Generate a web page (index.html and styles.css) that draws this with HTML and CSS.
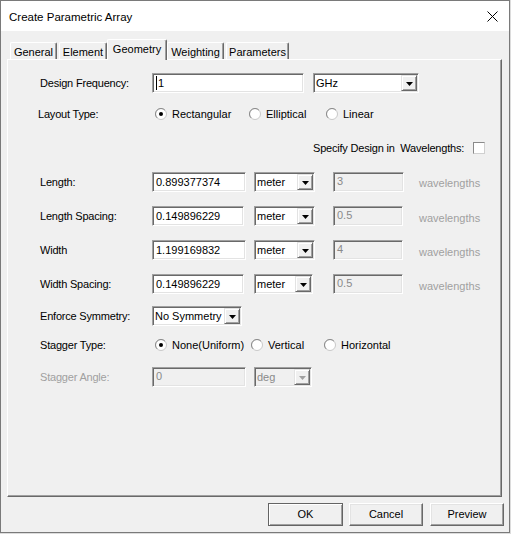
FILE: index.html
```html
<!DOCTYPE html>
<html>
<head>
<meta charset="utf-8">
<title>Create Parametric Array</title>
<link rel="stylesheet" href="styles.css">
</head>
<body>
<div class="win">
  <div class="titlebar">
    <span class="title">Create Parametric Array</span>
    <svg class="close" width="11" height="11" viewBox="0 0 11 11"><path d="M0.5 0.5 L10.5 10.5 M10.5 0.5 L0.5 10.5" stroke="#000" stroke-width="1" fill="none"/></svg>
  </div>
  <div class="client">
    <div class="tabs">
      <div class="tab t-gen">General</div>
      <div class="tab t-ele">Element</div>
      <div class="tab t-geo active">Geometry</div>
      <div class="tab t-wei">Weighting</div>
      <div class="tab t-par">Parameters</div>
    </div>
    <div class="panel">
      <div class="row r1">
        <span class="lbl">Design Frequency:</span>
        <div class="tb w152"><span class="caret"></span>1</div>
        <div class="sel w106 ml9"><span class="stxt">GHz</span><span class="dbtn"><svg width="7" height="4"><polygon points="0,0 7,0 3.5,4" fill="#000"/></svg></span></div>
      </div>
      <div class="row r2">
        <span class="lbl lbl-lt">Layout Type:</span>
        <div class="opts">
          <span class="opt lt1"><svg class="radio" width="12" height="12" viewBox="0 0 12 12"><circle cx="6" cy="6" r="5.5" fill="#fff" stroke="#c8c8c8"/><path d="M2.1 9.9 A5.5 5.5 0 0 1 9.9 2.1" stroke="#8a8a8a" fill="none"/><circle cx="6" cy="6" r="2" fill="#000"/></svg>Rectangular</span>
          <span class="opt lt2"><svg class="radio" width="12" height="12" viewBox="0 0 12 12"><circle cx="6" cy="6" r="5.5" fill="#fff" stroke="#c8c8c8"/><path d="M2.1 9.9 A5.5 5.5 0 0 1 9.9 2.1" stroke="#8a8a8a" fill="none"/></svg>Elliptical</span>
          <span class="opt"><svg class="radio" width="12" height="12" viewBox="0 0 12 12"><circle cx="6" cy="6" r="5.5" fill="#fff" stroke="#c8c8c8"/><path d="M2.1 9.9 A5.5 5.5 0 0 1 9.9 2.1" stroke="#8a8a8a" fill="none"/></svg>Linear</span>
        </div>
      </div>
      <div class="row r3">
        <span class="spec">Specify Design in&nbsp; Wavelengths:</span>
        <span class="chk"></span>
      </div>
      <div class="row r4">
        <span class="lbl">Length:</span>
        <div class="tb w94">0.899377374</div>
        <div class="sel w61 ml8"><span class="stxt">meter</span><span class="dbtn"><svg width="7" height="4"><polygon points="0,0 7,0 3.5,4" fill="#000"/></svg></span></div>
        <div class="tb dis w71 ml18">3</div>
        <span class="wl">wavelengths</span>
      </div>
      <div class="row r5">
        <span class="lbl">Length Spacing:</span>
        <div class="tb w92">0.149896229</div>
        <div class="sel w61 ml10"><span class="stxt">meter</span><span class="dbtn"><svg width="7" height="4"><polygon points="0,0 7,0 3.5,4" fill="#000"/></svg></span></div>
        <div class="tb dis w70 ml18">0.5</div>
        <span class="wl wl2">wavelengths</span>
      </div>
      <div class="row r6">
        <span class="lbl">Width</span>
        <div class="tb w94">1.199169832</div>
        <div class="sel w61 ml8"><span class="stxt">meter</span><span class="dbtn"><svg width="7" height="4"><polygon points="0,0 7,0 3.5,4" fill="#000"/></svg></span></div>
        <div class="tb dis w70 ml18">4</div>
        <span class="wl wl2">wavelengths</span>
      </div>
      <div class="row r7">
        <span class="lbl">Width Spacing:</span>
        <div class="tb w92">0.149896229</div>
        <div class="sel w59 ml10"><span class="stxt">meter</span><span class="dbtn"><svg width="7" height="4"><polygon points="0,0 7,0 3.5,4" fill="#000"/></svg></span></div>
        <div class="tb dis w70 ml20">0.5</div>
        <span class="wl wl2">wavelengths</span>
      </div>
      <div class="row r8">
        <span class="lbl">Enforce Symmetry:</span>
        <div class="sel w90"><span class="stxt">No Symmetry</span><span class="dbtn"><svg width="7" height="4"><polygon points="0,0 7,0 3.5,4" fill="#000"/></svg></span></div>
      </div>
      <div class="row r9">
        <span class="lbl">Stagger Type:</span>
        <div class="opts">
          <span class="opt st1"><svg class="radio" width="12" height="12" viewBox="0 0 12 12"><circle cx="6" cy="6" r="5.5" fill="#fff" stroke="#c8c8c8"/><path d="M2.1 9.9 A5.5 5.5 0 0 1 9.9 2.1" stroke="#8a8a8a" fill="none"/><circle cx="6" cy="6" r="2" fill="#000"/></svg>None(Uniform)</span>
          <span class="opt st2"><svg class="radio" width="12" height="12" viewBox="0 0 12 12"><circle cx="6" cy="6" r="5.5" fill="#fff" stroke="#c8c8c8"/><path d="M2.1 9.9 A5.5 5.5 0 0 1 9.9 2.1" stroke="#8a8a8a" fill="none"/></svg>Vertical</span>
          <span class="opt"><svg class="radio" width="12" height="12" viewBox="0 0 12 12"><circle cx="6" cy="6" r="5.5" fill="#fff" stroke="#c8c8c8"/><path d="M2.1 9.9 A5.5 5.5 0 0 1 9.9 2.1" stroke="#8a8a8a" fill="none"/></svg>Horizontal</span>
        </div>
      </div>
      <div class="row r10">
        <span class="lbl gray">Stagger Angle:</span>
        <div class="tb dis w94">0</div>
        <div class="sel sdis w58 ml8"><span class="stxt">deg</span><span class="dbtn"><svg width="7" height="4"><polygon points="0,0 7,0 3.5,4" fill="#a0a0a0"/></svg></span></div>
      </div>
    </div>
    <div class="buttons">
      <div class="btn def">OK</div>
      <div class="btn b-cancel">Cancel</div>
      <div class="btn b-prev">Preview</div>
    </div>
  </div>
</div>
</body>
</html>
```
FILE: styles.css
```css
* { box-sizing: border-box; }
html, body { margin: 0; padding: 0; }
body {
  width: 511px;
  height: 534px;
  overflow: hidden;
  background: #dcdcdc;
  font-family: "Liberation Sans", Arial, sans-serif;
  font-size: 11px;
  color: #000;
}
.win {
  width: 510px;
  height: 533px;
  background: #f0f0f0;
  border: 1px solid #7a7a7a;
  display: flex;
  flex-direction: column;
}
.titlebar {
  height: 30px;
  background: #fff;
  display: flex;
  align-items: center;
  padding-left: 8px;
  flex: none;
}
.title {
  font-size: 11.5px;
  flex: 1;
  padding-top: 1px;
}
.close {
  margin-right: 11px;
  margin-top: 1px;
}
.client {
  flex: 1;
  padding-top: 8px;
}
.tabs {
  display: flex;
  align-items: flex-end;
  height: 20px;
  padding-left: 9px;
  position: relative;
  z-index: 2;
}
.tab {
  height: 17px;
  display: flex;
  align-items: center;
  justify-content: center;
  background: #f0f0f0;
  border-top: 1px solid #fff;
  border-left: 1px solid #fff;
  border-right: 1px solid #696969;
  box-shadow: inset -1px 0 #a0a0a0;
  border-radius: 2px 2px 0 0;
  padding-top: 1px;
}
.t-gen { width: 47px; }
.t-ele { width: 48px; margin-left: 2px; }
.t-geo { width: 60px; }
.t-wei { width: 57px; }
.t-par { width: 63px; margin-left: 2px; }
.tab.active {
  height: 21px;
  margin-bottom: -1px;
  padding-top: 0;
  padding-bottom: 3px;
}
.panel {
  margin-left: 6px;
  width: 495px;
  height: 438px;
  border: 1px solid;
  border-color: #fff #696969 #696969 #fff;
  box-shadow: inset -1px -1px #a0a0a0;
  padding: 13px 0 0 32px;
  position: relative;
  z-index: 1;
}
.row {
  display: flex;
  align-items: center;
  height: 20px;
}
.r2 { margin-top: 11px; }
.r3, .r4, .r5, .r6, .r7 { margin-top: 14px; }
.r8 { margin-top: 12px; }
.r9 { margin-top: 9px; }
.r10 { margin-top: 12px; }
.lbl {
  width: 112px;
  flex: none;
  letter-spacing: -0.2px;
}
.lbl-lt { margin-left: -2px; width: 114px; }
.gray { color: #a0a0a0; }
.tb {
  height: 20px;
  background: #fff;
  border: 1px solid;
  border-color: #a0a0a0 #fff #fff #a0a0a0;
  box-shadow: inset 1px 1px #696969, inset -1px -1px #e3e3e3;
  display: flex;
  align-items: center;
  padding: 0 2px 1px 3px;
  flex: none;
}
.tb.dis {
  background: #f0f0f0;
  color: #8a8a8a;
  align-items: flex-start;
  padding-top: 2px;
}
.caret {
  display: inline-block;
  width: 1px;
  height: 14px;
  background: #000;
  margin-right: 1px;
}
.sel {
  height: 20px;
  background: #fff;
  border: 1px solid;
  border-color: #a0a0a0 #fff #fff #a0a0a0;
  box-shadow: inset 1px 1px #696969, inset -1px -1px #e3e3e3;
  padding: 1px;
  display: flex;
  align-items: center;
  flex: none;
}
.sel.sdis { background: #f0f0f0; color: #8a8a8a; }
.stxt {
  flex: 1;
  padding-left: 1px;
  padding-bottom: 1px;
  white-space: nowrap;
  overflow: hidden;
}
.dbtn {
  width: 16px;
  height: 16px;
  flex: none;
  background: #f0f0f0;
  border: 1px solid;
  border-color: #e3e3e3 #696969 #696969 #e3e3e3;
  box-shadow: inset 1px 1px #fff, inset -1px -1px #a0a0a0;
  display: flex;
  align-items: center;
  justify-content: center;
  padding-top: 1px;
}
.w152 { width: 152px; }
.w106 { width: 106px; }
.w94 { width: 94px; }
.w92 { width: 92px; }
.w90 { width: 90px; }
.w71 { width: 71px; }
.w70 { width: 70px; }
.w61 { width: 61px; }
.w59 { width: 59px; }
.w58 { width: 58px; }
.ml8 { margin-left: 8px; }
.ml9 { margin-left: 9px; }
.ml10 { margin-left: 10px; }
.ml18 { margin-left: 18px; }
.ml20 { margin-left: 20px; }
.wl {
  color: #a0a0a0;
  margin-left: 15px;
  padding-top: 1px;
}
.wl2 { margin-left: 16px; padding-top: 3px; }
.opts {
  display: flex;
  align-items: center;
  margin-left: 3px;
}
.opt {
  display: flex;
  align-items: center;
  white-space: nowrap;
}
.radio { margin-right: 5px; flex: none; }
.lt1 { width: 94px; }
.lt2 { width: 77px; }
.st1 { width: 96px; }
.st2 { width: 73px; }
.spec {
  margin-left: 273px;
  letter-spacing: -0.2px;
}
.chk {
  width: 12px;
  height: 12px;
  margin-left: 9px;
  background: #fff;
  border: 1px solid;
  border-color: #8a8a8a #d0d0d0 #d0d0d0 #8a8a8a;
}
.buttons {
  display: flex;
  justify-content: flex-end;
  margin-top: 6px;
  padding-right: 5px;
}
.btn {
  width: 74px;
  height: 23px;
  display: flex;
  align-items: center;
  justify-content: center;
  background: #f0f0f0;
  border: 1px solid;
  border-color: #fff #696969 #696969 #fff;
  box-shadow: inset -1px -1px #a0a0a0, inset 1px 1px #e3e3e3;
  padding-bottom: 1px;
}
.btn.def {
  width: 75px;
  border-color: #646464;
  box-shadow: inset 1px 1px #fff, inset -1px -1px #a0a0a0;
}
.b-cancel { margin-left: 6px; }
.b-prev { margin-left: 7px; }
```
